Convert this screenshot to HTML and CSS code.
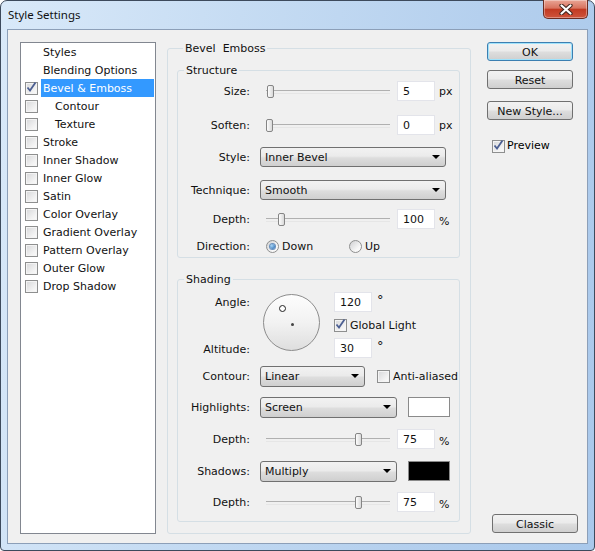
FILE: index.html
```html
<!DOCTYPE html>
<html lang="en">

<head>
    <meta charset="UTF-8">
    <link rel="stylesheet" href="styles.css">
    <title>Style Settings</title>
</head>

<body>
    <div class="window">
        <div class="titlebar">
            <span class="title">Style Settings</span>
            <div class="close">
                <svg width="14" height="11" viewBox="0 0 14 11">
                    <path d="M2.5 1.5 L11.5 9.5 M11.5 1.5 L2.5 9.5" stroke="#40261f" stroke-width="4.2" stroke-linecap="round" fill="none"/>
                    <path d="M2.5 1.5 L11.5 9.5 M11.5 1.5 L2.5 9.5" stroke="#fff" stroke-width="2.2" stroke-linecap="round" fill="none"/>
                </svg>
            </div>
        </div>

        <div class="client">
            <ul class="effects">
                <li class="fx"><span class="slot"></span><span class="fx-name">Styles</span></li>
                <li class="fx"><span class="slot"></span><span class="fx-name">Blending Options</span></li>
                <li class="fx selected">
                    <span class="slot check on">
                        <svg width="11" height="11" viewBox="0 0 11 11"><path d="M1.5 5.5 L4 8.5 L9.5 0.5" stroke="#4c5f92" stroke-width="1.8" fill="none"/></svg>
                    </span>
                    <span class="fx-name">Bevel &amp; Emboss</span>
                </li>
                <li class="fx sub"><span class="slot check"></span><span class="fx-name">Contour</span></li>
                <li class="fx sub"><span class="slot check"></span><span class="fx-name">Texture</span></li>
                <li class="fx"><span class="slot check"></span><span class="fx-name">Stroke</span></li>
                <li class="fx"><span class="slot check"></span><span class="fx-name">Inner Shadow</span></li>
                <li class="fx"><span class="slot check"></span><span class="fx-name">Inner Glow</span></li>
                <li class="fx"><span class="slot check"></span><span class="fx-name">Satin</span></li>
                <li class="fx"><span class="slot check"></span><span class="fx-name">Color Overlay</span></li>
                <li class="fx"><span class="slot check"></span><span class="fx-name">Gradient Overlay</span></li>
                <li class="fx"><span class="slot check"></span><span class="fx-name">Pattern Overlay</span></li>
                <li class="fx"><span class="slot check"></span><span class="fx-name">Outer Glow</span></li>
                <li class="fx"><span class="slot check"></span><span class="fx-name">Drop Shadow</span></li>
            </ul>

            <fieldset class="group main">
                <legend>Bevel&nbsp; Emboss</legend>

                <fieldset class="group structure">
                    <legend>Structure</legend>
                    <div class="form">
                        <div class="label">Size:</div>
                        <div class="ctrl">
                            <div class="slider"><span class="thumb" style="left: 7px"></span></div>
                            <input class="num" value="5">
                            <span class="unit">px</span>
                        </div>

                        <div class="label">Soften:</div>
                        <div class="ctrl">
                            <div class="slider"><span class="thumb" style="left: 6px"></span></div>
                            <input class="num" value="0">
                            <span class="unit">px</span>
                        </div>

                        <div class="label">Style:</div>
                        <div class="ctrl">
                            <div class="select wide">Inner Bevel</div>
                        </div>

                        <div class="label">Technique:</div>
                        <div class="ctrl">
                            <div class="select wide">Smooth</div>
                        </div>

                        <div class="label">Depth:</div>
                        <div class="ctrl">
                            <div class="slider"><span class="thumb" style="left: 18px"></span></div>
                            <input class="num" value="100">
                            <span class="unit pct">%</span>
                        </div>

                        <div class="label">Direction:</div>
                        <div class="ctrl dir">
                            <label class="choice"><span class="radio on"></span>Down</label>
                            <label class="choice"><span class="radio"></span>Up</label>
                        </div>
                    </div>
                </fieldset>

                <fieldset class="group shading">
                    <legend>Shading</legend>
                    <div class="form">
                        <div class="label angle-labels">
                            <span>Angle:</span>
                            <span>Altitude:</span>
                        </div>
                        <div class="ctrl angle">
                            <div class="dial">
                                <span class="dial-light"></span>
                                <span class="dial-center"></span>
                            </div>
                            <div class="angle-fields">
                                <div class="field-row">
                                    <input class="num" value="120">
                                    <span class="deg">°</span>
                                </div>
                                <label class="choice">
                                    <span class="check on">
                                        <svg width="11" height="11" viewBox="0 0 11 11"><path d="M1.5 5.5 L4 8.5 L9.5 0.5" stroke="#4c5f92" stroke-width="1.8" fill="none"/></svg>
                                    </span>Global Light
                                </label>
                                <div class="field-row">
                                    <input class="num" value="30">
                                    <span class="deg">°</span>
                                </div>
                            </div>
                        </div>

                        <div class="label">Contour:</div>
                        <div class="ctrl">
                            <div class="select short">Linear</div>
                            <label class="choice aa"><span class="check"></span>Anti-aliased</label>
                        </div>

                        <div class="label">Highlights:</div>
                        <div class="ctrl">
                            <div class="select mid">Screen</div>
                            <span class="swatch light"></span>
                        </div>

                        <div class="label">Depth:</div>
                        <div class="ctrl">
                            <div class="slider"><span class="thumb" style="left: 95px"></span></div>
                            <input class="num" value="75">
                            <span class="unit pct">%</span>
                        </div>

                        <div class="label">Shadows:</div>
                        <div class="ctrl">
                            <div class="select mid">Multiply</div>
                            <span class="swatch dark"></span>
                        </div>

                        <div class="label">Depth:</div>
                        <div class="ctrl">
                            <div class="slider"><span class="thumb" style="left: 95px"></span></div>
                            <input class="num" value="75">
                            <span class="unit pct">%</span>
                        </div>
                    </div>
                </fieldset>
            </fieldset>

            <div class="actions">
                <button class="btn default">OK</button>
                <button class="btn">Reset</button>
                <button class="btn new-style">New Style...</button>
                <label class="choice preview">
                    <span class="check on">
                        <svg width="11" height="11" viewBox="0 0 11 11"><path d="M1.5 5.5 L4 8.5 L9.5 0.5" stroke="#4c5f92" stroke-width="1.8" fill="none"/></svg>
                    </span>Preview
                </label>
                <button class="btn classic">Classic</button>
            </div>
        </div>
    </div>
</body>

</html>
```

FILE: styles.css
```css
* {
    margin: 0;
    padding: 0;
    box-sizing: border-box;
}

body {
    background: #fff;
    font-family: "DejaVu Sans", Tahoma, sans-serif;
    font-size: 11px;
    color: #000;
}

/* window frame */

.window {
    width: 595px;
    height: 551px;
    display: flex;
    flex-direction: column;
    border: 1px solid #3d4a5c;
    border-radius: 7px 7px 4px 4px;
    background: linear-gradient(100deg, #d9e9f9 0%, #c6dcf3 35%, #b5d0ee 70%, #a9c8eb 100%);
}

.titlebar {
    height: 28px;
    display: flex;
    justify-content: space-between;
    align-items: flex-start;
    padding-left: 7px;
}

.title {
    font-family: "Noto Sans", sans-serif;
    font-size: 11.5px;
    line-height: 28px;
    color: #111;
}

.close {
    width: 45px;
    height: 19px;
    margin-right: 6px;
    margin-top: -1px;
    border: 1px solid #6b2c22;
    border-top: none;
    border-radius: 0 0 5px 5px;
    background: linear-gradient(#e9a595, #d8735f 45%, #c23a22 52%, #cf543c 100%);
    box-shadow: inset 0 0 0 1px rgba(255, 255, 255, 0.35);
    display: flex;
    align-items: center;
    justify-content: center;
}

.client {
    flex: 1;
    margin: 0 6px 6px;
    border: 1px solid #8c9fb8;
    background: #f0f0f0;
    display: flex;
    padding: 12px 9px 9px 12px;
}

/* effects list */

.effects {
    list-style: none;
    width: 136px;
    flex: none;
    background: #fff;
    border: 1px solid #828790;
}

.fx {
    display: flex;
    align-items: center;
    height: 18px;
}

.fx .slot {
    width: 13px;
    height: 13px;
    margin-left: 4px;
    margin-right: 3px;
    flex: none;
}

.fx-name {
    flex: 1;
    height: 18px;
    line-height: 18px;
    padding: 1px 0 0 2px;
    margin-right: 1px;
    white-space: nowrap;
    color: #111;
}

.fx.sub .fx-name {
    padding-left: 14px;
}

.fx.selected .fx-name {
    background: #3399ff;
    color: #fff;
}

/* group boxes */

.group {
    border: 1px solid #d5dfe5;
    border-radius: 3px;
    min-width: 0;
}

.group legend {
    margin-left: 6px;
    padding: 0 2px;
    line-height: 13px;
    color: #111;
}

.main {
    width: 304px;
    flex: none;
    margin-left: 11px;
    padding: 9px 10px 9px 9px;
}

.structure {
    padding: 4px 0 1px;
}

.shading {
    margin-top: 15px;
    padding: 6px 0 9px;
}

.form {
    display: grid;
    grid-template-columns: 72px 1fr;
    column-gap: 10px;
    align-items: start;
    color: #111;
}

.structure .form {
    grid-template-rows: 34px 32px 33px 29px 27px 20px;
}

.shading .form {
    grid-template-rows: 74px 31px 32px 32px 31px 20px;
}

.label {
    text-align: right;
    line-height: 20px;
    padding-top: 1px;
    white-space: nowrap;
}

.ctrl {
    display: flex;
    align-items: center;
    height: 20px;
}

/* slider */

.slider {
    position: relative;
    width: 132px;
    height: 20px;
    flex: none;
}

.slider::before {
    content: "";
    position: absolute;
    left: 6px;
    right: 2px;
    top: 9px;
    height: 2px;
    border-top: 1px solid #b0b0b0;
    border-bottom: 1px solid #e6e6e6;
}

.thumb {
    position: absolute;
    top: 4px;
    width: 7px;
    height: 13px;
    border: 1px solid #858585;
    border-radius: 2px;
    background: linear-gradient(to right, #fdfdfd, #d9d9d9);
}

.num {
    width: 38px;
    height: 20px;
    flex: none;
    border: 1px solid #e3e4ea;
    background: #fff;
    padding: 1px 0 0 5px;
    font: inherit;
    color: #111;
    outline: none;
}

.slider + .num {
    margin-left: 5px;
}

.unit {
    margin-left: 4px;
    padding-top: 1px;
}

.unit.pct {
    padding-top: 0;
    margin-top: 5px;
}

/* drop downs */

.select {
    display: flex;
    align-items: center;
    justify-content: space-between;
    height: 20px;
    flex: none;
    padding: 1px 5px 0 4px;
    border: 1px solid #707070;
    border-radius: 3px;
    background: linear-gradient(#f2f2f2, #ebebeb 45%, #dddddd 55%, #cfcfcf);
}

.select::after {
    content: "";
    margin-top: -1px;
    border-left: 4px solid transparent;
    border-right: 4px solid transparent;
    border-top: 4px solid #000;
}

.select.wide {
    width: 186px;
}

.select.mid {
    width: 137px;
    height: 21px;
}

.select.short {
    width: 105px;
    height: 21px;
}

.swatch {
    width: 42px;
    height: 20px;
    margin-left: 11px;
    border: 1px solid #8a8a8a;
}

.swatch.light {
    background: #fff;
}

.swatch.dark {
    background: #000;
}

/* checkboxes and radios */

.choice {
    display: flex;
    align-items: center;
    gap: 3px;
    white-space: nowrap;
    line-height: 14px;
    padding-top: 1px;
}

.check {
    width: 13px;
    height: 13px;
    flex: none;
    display: flex;
    align-items: center;
    justify-content: center;
    border: 1px solid #8e8f8f;
    background: linear-gradient(135deg, #d6d7d9, #f3f3f3 70%, #fbfbfb);
    box-shadow: inset 0 0 0 1px #f4f4f4;
}

.check svg {
    margin-top: -2px;
}

.radio {
    width: 13px;
    height: 13px;
    flex: none;
    display: flex;
    align-items: center;
    justify-content: center;
    border: 1px solid #8e8f8f;
    border-radius: 50%;
    background: linear-gradient(135deg, #cfd0d2, #f8f8f8 70%);
}

.radio.on::after {
    content: "";
    width: 5px;
    height: 5px;
    border-radius: 50%;
    background: radial-gradient(circle at 35% 35%, #a8d6f7, #1b5ea8);
    box-shadow: 0 0 0 1px #6a90bd;
}

.dir .choice:first-child {
    width: 83px;
    margin-left: 6px;
}

.aa {
    margin-left: 12px;
}

/* angle dial */

.angle-labels {
    height: 68px;
    display: flex;
    flex-direction: column;
    justify-content: space-between;
}

.ctrl.angle {
    height: 66px;
    align-items: flex-start;
}

.dial {
    position: relative;
    width: 57px;
    height: 57px;
    flex: none;
    margin: 2px 0 0 3px;
    border: 1px solid #8c8c8c;
    border-radius: 50%;
    background: linear-gradient(#fdfdfd, #f2f2f2 50%, #dedede);
}

.dial-light {
    position: absolute;
    left: 15px;
    top: 10px;
    width: 7px;
    height: 7px;
    border: 1.5px solid #222;
    border-radius: 50%;
    background: #fff;
}

.dial-center {
    position: absolute;
    left: 27px;
    top: 28px;
    width: 3px;
    height: 3px;
    border-radius: 50%;
    background: #444;
}

.angle-fields {
    height: 66px;
    margin-left: 14px;
    display: flex;
    flex-direction: column;
    justify-content: space-between;
}

.field-row {
    display: flex;
    align-items: flex-start;
}

.deg {
    margin-left: 5px;
    margin-top: 1px;
    font-size: 13px;
    line-height: 1;
}

/* buttons */

.actions {
    width: 90px;
    flex: none;
    margin-left: 16px;
    display: flex;
    flex-direction: column;
    align-items: flex-start;
}

.btn {
    width: 86px;
    height: 19px;
    margin-bottom: 9px;
    padding-top: 1px;
    border: 1px solid #707070;
    border-radius: 3px;
    background: linear-gradient(#f2f2f2, #ebebeb 45%, #dddddd 55%, #cfcfcf);
    font: inherit;
    color: #111;
}

.btn.default {
    border-color: #3c7fb1;
    box-shadow: inset 0 0 0 1px #9fe2fb;
}

.btn.new-style {
    margin-top: 3px;
    margin-bottom: 18px;
}

.preview {
    margin-left: 5px;
    gap: 2px;
}

.btn.classic {
    margin: auto 0 1px 5px;
}
```
